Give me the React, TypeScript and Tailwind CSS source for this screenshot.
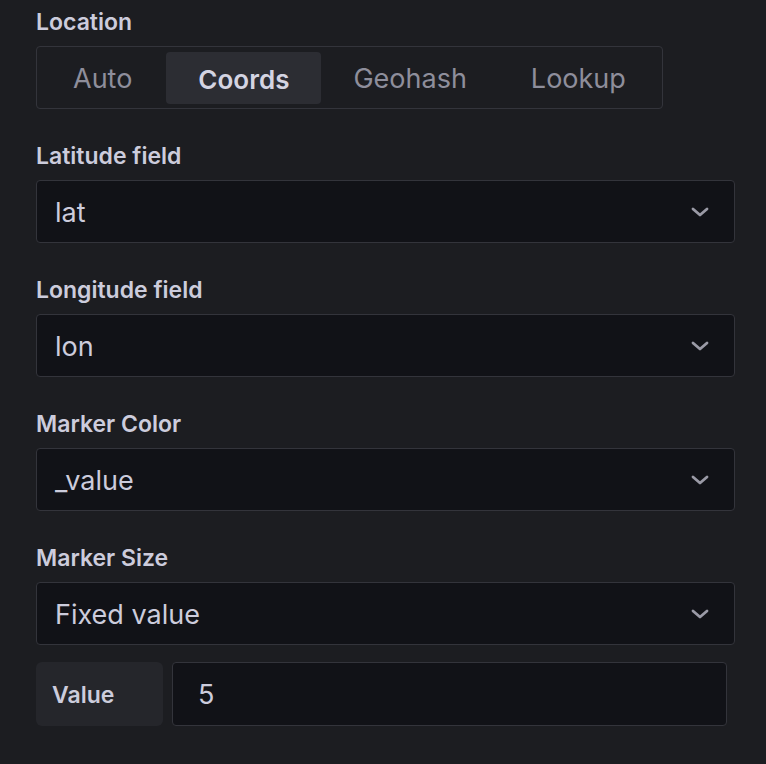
import { useState } from 'react'

const font = { fontFamily: 'Inter, "Noto Sans", "Liberation Sans", sans-serif' }

function Chevron() {
  return (
    <svg width="18" height="10" viewBox="0 0 18 10" fill="none" className="shrink-0">
      <path d="M2 2l7 6 7-6" stroke="#9a9aa6" strokeWidth="2.8" strokeLinecap="round" strokeLinejoin="round" />
    </svg>
  )
}

function FieldLabel({ children }: { children: React.ReactNode }) {
  return <div className="mb-[10px] h-[30px] pt-[1px] text-[23px] leading-[30px] font-semibold text-[#ccccdc]">{children}</div>
}

function Select({ value }: { value: string }) {
  return (
    <div className="flex h-[63px] items-center justify-between rounded-[4px] border border-[#33343b] bg-[#111217] pl-[18px] pr-[25px] text-[27px] text-[#ccccdc]">
      <span className="pt-[3px]">{value}</span>
      <Chevron />
    </div>
  )
}

export default function App() {
  const [mode, setMode] = useState('Coords')
  const modes = ['Auto', 'Coords', 'Geohash', 'Lookup']

  return (
    <div style={font} className="min-h-[764px] w-[766px] bg-[#1c1d21] pl-[36px] pr-[31px] pt-[6px]">
      <div className="mb-[31px]">
        <FieldLabel>Location</FieldLabel>
        <div className="inline-flex h-[63px] items-center rounded-[4px] border border-[#33343b] p-[4px]">
          {modes.map((m) => (
            <button
              key={m}
              onClick={() => setMode(m)}
              className={
                m === mode
                  ? 'ml-[2px] h-[52px] rounded-[4px] bg-[#2c2d33] px-[32px] pt-[3px] text-[26px] font-semibold text-[#d4d4e2]'
                  : 'h-[52px] rounded-[4px] px-[32px] pt-[3px] text-[27px] text-[#8e8e9b]'
              }
            >
              {m}
            </button>
          ))}
        </div>
      </div>

      <div className="mb-[31px]">
        <FieldLabel>Latitude field</FieldLabel>
        <Select value="lat" />
      </div>
      <div className="mb-[31px]">
        <FieldLabel>Longitude field</FieldLabel>
        <Select value="lon" />
      </div>
      <div className="mb-[31px]">
        <FieldLabel>Marker Color</FieldLabel>
        <Select value="_value" />
      </div>
      <div className="mb-[17px]">
        <FieldLabel>Marker Size</FieldLabel>
        <Select value="Fixed value" />
      </div>

      <div className="flex gap-[9px] pr-[8px]">
        <div className="flex h-[64px] w-[127px] items-center rounded-[6px] bg-[#25262b] pl-[16px] pt-[2px] text-[23px] font-semibold text-[#ccccdc]">
          Value
        </div>
        <div className="flex h-[64px] flex-1 items-center rounded-[4px] border border-[#33343b] bg-[#111217] pl-[25px] pt-[3px] text-[27px] text-[#ccccdc]">
          5
        </div>
      </div>
    </div>
  )
}
